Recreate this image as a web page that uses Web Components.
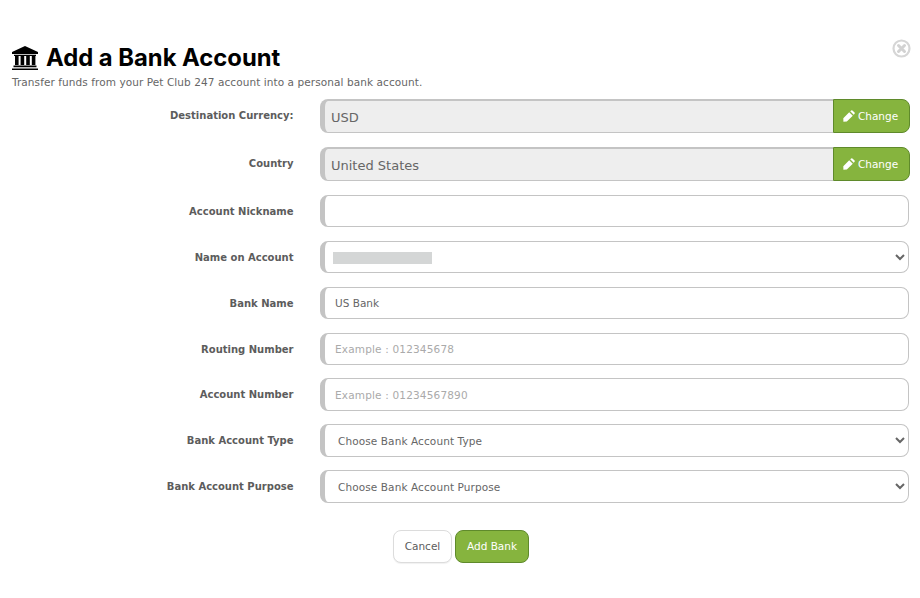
<!DOCTYPE html>
<html><head><meta charset="utf-8"><style>
html,body{margin:0;padding:0;background:#fff}
body{font-family:"DejaVu Sans",sans-serif;color:#555;width:920px;height:598px;overflow:hidden}
</style></head><body>
<template id="t-modal"><style>
:host{display:block;padding:44px 10px 0 12px;position:relative}
header{display:flex;align-items:center;gap:8px;height:28px}
h1{margin:0;font:700 23.800px/28px Inter,sans-serif;color:#000}
p{margin:0;padding-top:3px;font-size:10.500px;line-height:15px;color:#666;letter-spacing:.08px;height:15px}
svg.bank{width:26px;height:24px;display:block;flex:none}
svg.close{position:absolute;left:892px;top:39px;width:19px;height:19px}
.form{margin-top:9px;display:flex;flex-direction:column}
.actions{display:flex;justify-content:flex-start;gap:3px;margin:14px 0 0 381px}
</style>
<header><svg class="bank" viewBox="0 0 26 24"><path fill="#000" d="M13 0 26 6V8H0V6ZM2 8.800H24V10H2ZM3 10H6.600V19H3ZM8.600 10H12.200V19H8.600ZM14.200 10H17.800V19H14.200ZM19.800 10H23.400V19H19.800ZM1.500 19.500H24.500V21.200H1.500ZM0 22.400H26V24H0Z"/></svg><h1>Add a Bank Account</h1></header>
<p>Transfer funds from your Pet Club 247 account into a personal bank account.</p>
<svg class="close" viewBox="0 0 19 19"><circle cx="9.500" cy="9.500" r="8" fill="none" stroke="#d6d6d6" stroke-width="2.200"/><path d="M6.500 6.500 12.500 12.500M12.500 6.500 6.500 12.500" stroke="#d2d2d2" stroke-width="3" stroke-linecap="round"/></svg>
<div class="form"><slot></slot></div>
<div class="actions"><slot name="actions"></slot></div>
</template>

<template id="t-row"><style>
:host{display:grid;grid-template-columns:281.500px 1fr;column-gap:26.500px;align-items:center;height:var(--h,32px);margin-bottom:var(--mb,14px)}
label{font-size:10px;font-weight:700;color:#5c5c5c;text-align:right;padding-bottom:var(--lp,0)}
.c{display:flex;min-width:0;position:relative;margin-right:var(--mr,1px)}
</style><label><slot name="label"></slot></label><div class="c"><slot></slot></div></template>

<template id="t-input"><style>
:host{display:block;flex:1;min-width:0;position:relative}
input,select{box-sizing:border-box;width:100%;height:var(--h,32px);margin:0;background:#fff;border:1px solid #c4c4c4;border-left:5px solid #c4c4c4;border-radius:8px;font:10.500px "DejaVu Sans",sans-serif;color:#666;padding:0 9px 0 10px;outline:0}
select{padding-left:9px;letter-spacing:.1px}
input::placeholder{color:#aaa;opacity:1;letter-spacing:.17px}
input[readonly]{background:#eee;font-size:13px;border-radius:8px 0 0 8px;padding:2px 6px 0;border-right:0;border-top-width:2px;color:#666}
.mask{position:absolute;left:13px;top:11px;width:99px;height:12px;background:#d4d6d6}
</style></template>

<template id="t-btn"><style>
:host{display:inline-flex;align-items:center;justify-content:center;box-sizing:border-box;font-size:10.500px;border-radius:8px;height:33px;white-space:nowrap;padding-bottom:1px}
:host([kind=green]){background:#86b43e;border:1px solid #5f8a2b;color:#fff}
:host([kind=plain]){background:#fff;border:1px solid #dcdcdc;color:#5c5c5c;box-shadow:0 1px 1px rgba(0,0,0,.06)}
:host([kind=change]){background:#86b43e;border:1px solid #5f8a2b;color:#fff;border-radius:0 8px 8px 0;width:77px;height:34px;gap:3px;padding:0 2px 0 0}
svg{width:12px;height:12px;display:none}
:host([kind=change]) svg{display:block}
</style><svg viewBox="0 0 12 12"><path fill="#fff" d="M7.200 1.200 8.200.4Q8.800 0 9.400.4L11.600 2.600Q12 3.200 11.600 3.800L10.700 4.700ZM6.200 2.200 9.800 5.800 3.800 11.600 .4 11.800 .3 8.200Z"/></svg><slot></slot></template>

<script>
function tpl(id){return class extends HTMLElement{constructor(){super();const s=this.attachShadow({mode:'open'});s.append(document.getElementById(id).content.cloneNode(true))}}}
customElements.define('bank-modal',tpl('t-modal'));
customElements.define('form-row',tpl('t-row'));
customElements.define('action-button',tpl('t-btn'));
customElements.define('field-control',class extends tpl('t-input'){
  connectedCallback(){
    if(this._done)return;this._done=true;
    const s=this.shadowRoot,type=this.getAttribute('type');
    if(type==='select'){
      const el=document.createElement('select');
      const o=document.createElement('option');o.textContent=this.getAttribute('text')||'';el.append(o);s.append(el);
      if(this.hasAttribute('masked')){const m=document.createElement('div');m.className='mask';s.append(m)}
    }else{
      const el=document.createElement('input');
      el.setAttribute('value',this.getAttribute('value')||'');
      el.placeholder=this.getAttribute('placeholder')||'';
      if(this.hasAttribute('readonly'))el.setAttribute('readonly','');
      s.append(el);
    }
  }
});
</script>

<bank-modal>
<form-row style="--h:34px;--lp:1px;--mr:0"><span slot="label">Destination Currency:</span><field-control readonly value="USD"></field-control><action-button kind="change">Change</action-button></form-row>
<form-row style="--h:34px;--lp:1px;--mr:0"><span slot="label">Country</span><field-control readonly value="United States"></field-control><action-button kind="change">Change</action-button></form-row>
<form-row><span slot="label">Account Nickname</span><field-control></field-control></form-row>
<form-row><span slot="label">Name on Account</span><field-control type="select" masked></field-control></form-row>
<form-row><span slot="label">Bank Name</span><field-control value="US Bank"></field-control></form-row>
<form-row style="--mb:13px"><span slot="label">Routing Number</span><field-control placeholder="Example : 012345678"></field-control></form-row>
<form-row style="--h:33px;--mb:13px"><span slot="label">Account Number</span><field-control placeholder="Example : 01234567890"></field-control></form-row>
<form-row style="--h:33px;--mb:13px"><span slot="label">Bank Account Type</span><field-control type="select" text="Choose Bank Account Type"></field-control></form-row>
<form-row style="--h:33px;--mb:13px"><span slot="label">Bank Account Purpose</span><field-control type="select" text="Choose Bank Account Purpose"></field-control></form-row>
<action-button slot="actions" kind="plain" style="width:59px">Cancel</action-button>
<action-button slot="actions" kind="green" style="width:74px">Add Bank</action-button>
</bank-modal>
</body></html>
